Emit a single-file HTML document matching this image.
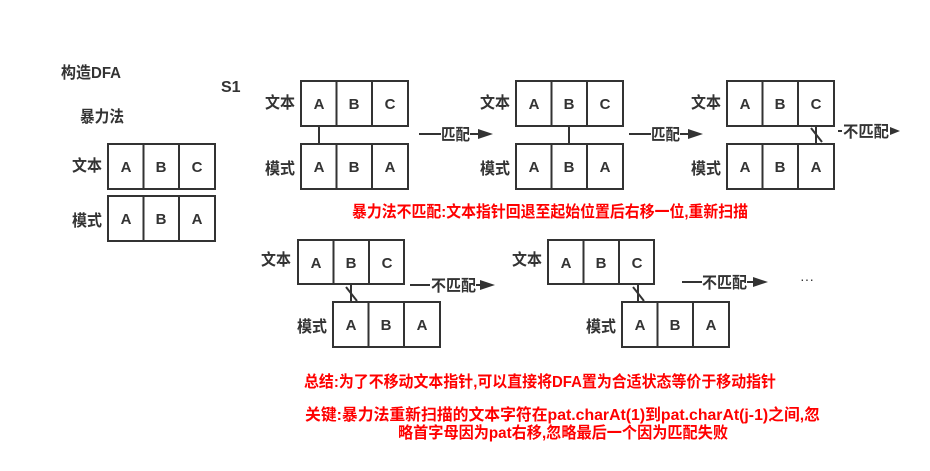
<!DOCTYPE html>
<html><head><meta charset="utf-8"><style>
html,body{margin:0;padding:0;background:#fff;}
svg{display:block;}
text{font-family:"Liberation Sans","Noto Sans CJK SC",sans-serif;font-weight:bold;}
.d{fill:#333;font-size:16px;}
.c{fill:#333;font-size:15px;text-anchor:middle;}
.r{fill:#f00;font-size:16px;}
rect{fill:#fff;stroke:#333;stroke-width:2;}
line{stroke:#333;stroke-width:2;}
</style></head><body>
<svg width="930" height="471" viewBox="0 0 930 471" xmlns="http://www.w3.org/2000/svg">
<text class="d" x="61" y="78" textLength="60" lengthAdjust="spacingAndGlyphs">构造DFA</text>
<text class="d" x="221" y="92">S1</text>
<text class="d" x="80" y="122" textLength="44" lengthAdjust="spacingAndGlyphs">暴力法</text>

<!-- left -->
<text class="d" x="72" y="171" textLength="30" lengthAdjust="spacingAndGlyphs">文本</text>
<text class="d" x="72" y="226" textLength="30" lengthAdjust="spacingAndGlyphs">模式</text>
<g transform="translate(108,144)">
<rect x="0" y="0" width="35.5" height="45"/><rect x="35.5" y="0" width="35.5" height="45"/><rect x="71" y="0" width="36" height="45"/>
<text class="c" x="18" y="28">A</text><text class="c" x="53" y="28">B</text><text class="c" x="89" y="28">C</text>
</g>
<g transform="translate(108,196)">
<rect x="0" y="0" width="35.5" height="45"/><rect x="35.5" y="0" width="35.5" height="45"/><rect x="71" y="0" width="36" height="45"/>
<text class="c" x="18" y="28">A</text><text class="c" x="53" y="28">B</text><text class="c" x="89" y="28">A</text>
</g>

<!-- group1 -->
<text class="d" x="265" y="108" textLength="30" lengthAdjust="spacingAndGlyphs">文本</text>
<text class="d" x="265" y="174" textLength="30" lengthAdjust="spacingAndGlyphs">模式</text>
<g transform="translate(301,81)">
<rect x="0" y="0" width="35.5" height="45"/><rect x="35.5" y="0" width="35.5" height="45"/><rect x="71" y="0" width="36" height="45"/>
<text class="c" x="18" y="28">A</text><text class="c" x="53" y="28">B</text><text class="c" x="89" y="28">C</text>
</g>
<g transform="translate(301,144)">
<rect x="0" y="0" width="35.5" height="45"/><rect x="35.5" y="0" width="35.5" height="45"/><rect x="71" y="0" width="36" height="45"/>
<text class="c" x="18" y="28">A</text><text class="c" x="53" y="28">B</text><text class="c" x="89" y="28">A</text>
</g>
<line x1="319" y1="126" x2="319" y2="144"/>
<line x1="419" y1="134" x2="441" y2="134"/>
<text class="d" x="441" y="140" textLength="29" lengthAdjust="spacingAndGlyphs">匹配</text>
<line x1="470" y1="134" x2="480" y2="134"/>
<polygon points="478,129 493,134 478,139" fill="#333"/>

<!-- group2 -->
<text class="d" x="480" y="108" textLength="30" lengthAdjust="spacingAndGlyphs">文本</text>
<text class="d" x="480" y="174" textLength="30" lengthAdjust="spacingAndGlyphs">模式</text>
<g transform="translate(516,81)">
<rect x="0" y="0" width="35.5" height="45"/><rect x="35.5" y="0" width="35.5" height="45"/><rect x="71" y="0" width="36" height="45"/>
<text class="c" x="18" y="28">A</text><text class="c" x="53" y="28">B</text><text class="c" x="89" y="28">C</text>
</g>
<g transform="translate(516,144)">
<rect x="0" y="0" width="35.5" height="45"/><rect x="35.5" y="0" width="35.5" height="45"/><rect x="71" y="0" width="36" height="45"/>
<text class="c" x="18" y="28">A</text><text class="c" x="53" y="28">B</text><text class="c" x="89" y="28">A</text>
</g>
<line x1="569" y1="126" x2="569" y2="144"/>
<line x1="629" y1="134" x2="651" y2="134"/>
<text class="d" x="651" y="140" textLength="29" lengthAdjust="spacingAndGlyphs">匹配</text>
<line x1="680" y1="134" x2="690" y2="134"/>
<polygon points="688,129 703,134 688,139" fill="#333"/>

<!-- group3 -->
<text class="d" x="691" y="108" textLength="30" lengthAdjust="spacingAndGlyphs">文本</text>
<text class="d" x="691" y="174" textLength="30" lengthAdjust="spacingAndGlyphs">模式</text>
<g transform="translate(727,81)">
<rect x="0" y="0" width="35.5" height="45"/><rect x="35.5" y="0" width="35.5" height="45"/><rect x="71" y="0" width="36" height="45"/>
<text class="c" x="18" y="28">A</text><text class="c" x="53" y="28">B</text><text class="c" x="89" y="28">C</text>
</g>
<g transform="translate(727,144)">
<rect x="0" y="0" width="35.5" height="45"/><rect x="35.5" y="0" width="35.5" height="45"/><rect x="71" y="0" width="36" height="45"/>
<text class="c" x="18" y="28">A</text><text class="c" x="53" y="28">B</text><text class="c" x="89" y="28">A</text>
</g>
<line x1="816" y1="126" x2="816" y2="143"/>
<line x1="811" y1="128" x2="822" y2="142"/>
<line x1="838" y1="131" x2="842" y2="131"/>
<text class="d" x="843" y="137" textLength="46" lengthAdjust="spacingAndGlyphs">不匹配</text>
<polygon points="890,127 900,131 890,135" fill="#333"/>

<text class="r" x="352" y="217" textLength="396" lengthAdjust="spacingAndGlyphs">暴力法不匹配:文本指针回退至起始位置后右移一位,重新扫描</text>

<!-- group4 -->
<text class="d" x="261" y="265" textLength="30" lengthAdjust="spacingAndGlyphs">文本</text>
<text class="d" x="297" y="332" textLength="30" lengthAdjust="spacingAndGlyphs">模式</text>
<g transform="translate(298,240)">
<rect x="0" y="0" width="35.5" height="44"/><rect x="35.5" y="0" width="35.5" height="44"/><rect x="71" y="0" width="35" height="44"/>
<text class="c" x="18" y="28">A</text><text class="c" x="53" y="28">B</text><text class="c" x="89" y="28">C</text>
</g>
<g transform="translate(333,302)">
<rect x="0" y="0" width="35.5" height="45"/><rect x="35.5" y="0" width="35.5" height="45"/><rect x="71" y="0" width="36" height="45"/>
<text class="c" x="18" y="28">A</text><text class="c" x="53" y="28">B</text><text class="c" x="89" y="28">A</text>
</g>
<line x1="351" y1="284" x2="351" y2="301"/>
<line x1="346" y1="287" x2="357" y2="301"/>
<line x1="410" y1="285" x2="430" y2="285"/>
<text class="d" x="431" y="291" textLength="45" lengthAdjust="spacingAndGlyphs">不匹配</text>
<line x1="476" y1="285" x2="482" y2="285"/>
<polygon points="480,280 495,285 480,290" fill="#333"/>

<!-- group5 -->
<text class="d" x="512" y="265" textLength="30" lengthAdjust="spacingAndGlyphs">文本</text>
<text class="d" x="586" y="332" textLength="30" lengthAdjust="spacingAndGlyphs">模式</text>
<g transform="translate(548,240)">
<rect x="0" y="0" width="35.5" height="44"/><rect x="35.5" y="0" width="35.5" height="44"/><rect x="71" y="0" width="35" height="44"/>
<text class="c" x="18" y="28">A</text><text class="c" x="53" y="28">B</text><text class="c" x="89" y="28">C</text>
</g>
<g transform="translate(622,302)">
<rect x="0" y="0" width="35.5" height="45"/><rect x="35.5" y="0" width="35.5" height="45"/><rect x="71" y="0" width="36" height="45"/>
<text class="c" x="18" y="28">A</text><text class="c" x="53" y="28">B</text><text class="c" x="89" y="28">A</text>
</g>
<line x1="638" y1="284" x2="638" y2="301"/>
<line x1="633" y1="287" x2="644" y2="301"/>
<line x1="682" y1="282" x2="702" y2="282"/>
<text class="d" x="702" y="288" textLength="45" lengthAdjust="spacingAndGlyphs">不匹配</text>
<line x1="747" y1="282" x2="755" y2="282"/>
<polygon points="753,277 768,282 753,287" fill="#333"/>
<text class="d" x="800" y="284" style="font-weight:normal;font-size:14px">···</text>

<text class="r" x="304" y="387" textLength="472" lengthAdjust="spacingAndGlyphs">总结:为了不移动文本指针,可以直接将DFA置为合适状态等价于移动指针</text>
<text class="r" x="305" y="420" textLength="515" lengthAdjust="spacingAndGlyphs">关键:暴力法重新扫描的文本字符在pat.charAt(1)到pat.charAt(j-1)之间,忽</text>
<text class="r" x="398" y="438" textLength="330" lengthAdjust="spacingAndGlyphs">略首字母因为pat右移,忽略最后一个因为匹配失败</text>
</svg>
</body></html>
